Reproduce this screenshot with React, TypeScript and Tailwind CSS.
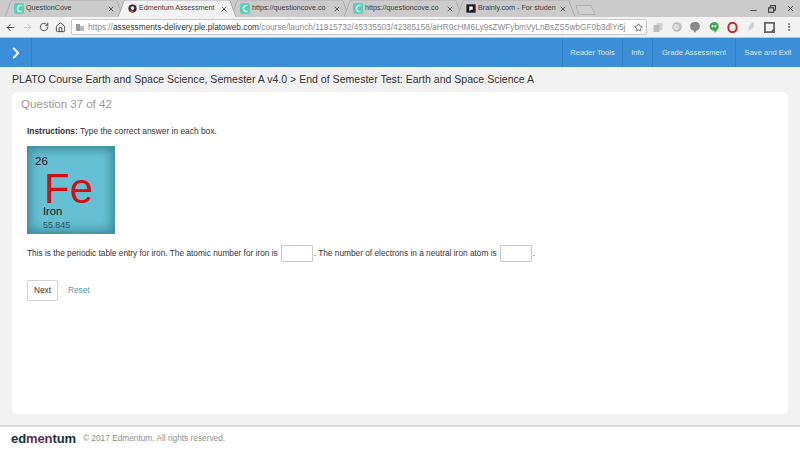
import React from 'react'
import { ArrowLeft, ArrowRight, RotateCw, Home, Star, X, ChevronRight, MoreVertical, Minus } from 'lucide-react'

function QCIcon() {
  return (
    <span className="w-[10px] h-[11px] rounded-[2px] bg-[#5fd0b8] flex items-center justify-center shrink-0">
      <span className="w-[5px] h-[7px] rounded-l-full border-[1.5px] border-r-0 border-white"></span>
    </span>
  )
}

function EdIcon() {
  return (
    <svg width="9" height="9" viewBox="0 0 11 11" className="shrink-0">
      <circle cx="5.5" cy="5.5" r="5" fill="#2b2b2b" />
      <circle cx="5.5" cy="5" r="2.2" fill="#fff" />
      <path d="M1.5 7.5 A5 5 0 0 0 7 10.2 L6 7.5 Z" fill="#c2453f" />
    </svg>
  )
}

function BrainlyIcon() {
  return (
    <svg width="10" height="11" viewBox="0 0 12 12" className="shrink-0">
      <rect x="0.5" y="1" width="11" height="10" fill="#1a1a1a" />
      <path d="M4 3.5 H8 V7.5 H6 L4 9 Z" fill="#fff" />
    </svg>
  )
}

function Tab({ icon, label, active }: { icon: React.ReactNode; label: string; active?: boolean }) {
  return (
    <div className={`relative w-[113px] h-[17px] flex items-center pl-[9px] pr-[3px] gap-[2px] ${active ? 'z-10' : ''}`}>
      <svg className="absolute left-0 top-0" width="118" height="17" viewBox="0 0 118 17">
        <path
          d="M0 17 L6 1 Q6.4 0 8 0 H110 Q111.6 0 112 1 L118 17"
          fill={active ? '#f2f2f2' : '#cbcbcb'}
          stroke={active ? '#9c9c9c' : '#a5a5a5'}
          strokeWidth="0.8"
        />
      </svg>
      <span className="relative w-[10px] flex items-center justify-center shrink-0">{icon}</span>
      <span className="relative flex-1 overflow-hidden whitespace-nowrap text-[7.2px] text-[#3c3c3c]">{label}</span>
      <X className="relative shrink-0 text-[#444]" size={8} strokeWidth={2.5} />
    </div>
  )
}

function NavItem({ label, w }: { label: string; w: string }) {
  return (
    <div className={`h-full flex items-center justify-center border-l border-[#2f7fc4] text-[7.6px] text-[#dcebf7] ${w}`}>
      {label}
    </div>
  )
}

function ExtIcon({ children }: { children: React.ReactNode }) {
  return <span className="w-[18.7px] flex items-center justify-center shrink-0">{children}</span>
}

export default function App() {
  return (
    <div className="w-[800px] h-[450px] overflow-hidden flex flex-col bg-[#f1f1f1] font-['Liberation_Sans',Arial,sans-serif]">
      {/* tab strip */}
      <div className="h-[17px] shrink-0 bg-[#cbcbcb] flex items-end pl-[5px] relative">
        <Tab icon={<QCIcon />} label="QuestionCove" />
        <Tab icon={<EdIcon />} label="Edmentum Assessment" active />
        <Tab icon={<QCIcon />} label="https://questioncove.co" />
        <Tab icon={<QCIcon />} label="https://questioncove.co" />
        <Tab icon={<BrainlyIcon />} label="Brainly.com - For studen" />
        <svg width="21" height="10" viewBox="0 0 21 10" className="ml-[5px] mb-[2px]">
          <path d="M4 9.5 L1 .5 H16 L20 9.5 Z" fill="#cfcfcf" stroke="#a8a8a8" strokeWidth="0.8" />
        </svg>
        <div className="ml-auto flex items-center h-full gap-[10px] pr-[5px] text-[#444]">
          <Minus size={9} strokeWidth={2.5} className="mt-[3px]" />
          <svg width="8" height="8" viewBox="0 0 8 8" fill="none" stroke="#444" strokeWidth="1.2">
            <rect x="2.5" y=".6" width="5" height="4.5" />
            <rect x=".6" y="2.8" width="5" height="4.5" fill="#cbcbcb" />
          </svg>
          <X size={9} strokeWidth={2.5} />
        </div>
      </div>

      {/* toolbar */}
      <div className="h-[21px] shrink-0 bg-[#f2f2f2] flex items-center pl-[5px] border-b border-[#c4c4c4]">
        <ArrowLeft size={11} strokeWidth={2} className="text-[#444] shrink-0" />
        <ArrowRight size={11} strokeWidth={2} className="text-[#c4c4c4] shrink-0 ml-[6px]" />
        <RotateCw size={10} strokeWidth={2} className="text-[#444] shrink-0 ml-[6px]" />
        <Home size={11} strokeWidth={2} className="text-[#444] shrink-0 ml-[6px]" />
        <div className="ml-[5px] w-[576px] h-[16px] shrink-0 bg-white border border-[#c8c8c8] rounded-[2px] flex items-center pl-[4px] pr-[3px]">
          <svg width="8" height="7" viewBox="0 0 8 7" className="shrink-0">
            <rect x="0" y="0" width="4" height="7" fill="#9a9a9a" />
            <rect x="4" y="2" width="4" height="5" fill="#bcbcbc" />
          </svg>
          <span className="ml-[4px] flex-1 overflow-hidden whitespace-nowrap text-[8.3px] text-[#8a8a8a]">
            https://<span className="text-[#333]">assessments-delivery.ple.platoweb.com</span>/course/launch/11915732/45335503/42385158/aHR0cHM6Ly9sZWFybmVyLnBsZS5wbGF0b3dlYi5j
          </span>
          <Star size={9} strokeWidth={2} className="text-[#444] shrink-0 ml-[3px]" />
        </div>
        <div className="ml-[1.5px] flex items-center">
          <ExtIcon>
            <svg width="10" height="10" viewBox="0 0 10 10">
              <rect x="3.5" y="1" width="6" height="7" fill="#d2d2d2" />
              <rect x="0.5" y="3" width="6" height="7" fill="#bdbdbd" />
            </svg>
          </ExtIcon>
          <ExtIcon>
            <svg width="10" height="10" viewBox="0 0 10 10">
              <circle cx="5" cy="5" r="4.8" fill="#bdbdbd" />
              <circle cx="4.4" cy="5" r="3" fill="#dedede" />
            </svg>
          </ExtIcon>
          <ExtIcon>
            <svg width="10" height="11" viewBox="0 0 10 11">
              <path d="M5 0 A4.6 4.4 0 0 1 6.6 8.6 L5 11 L3.4 8.6 A4.6 4.4 0 0 1 5 0 Z" fill="#8a8a8a" />
            </svg>
          </ExtIcon>
          <ExtIcon>
            <svg width="10" height="11" viewBox="0 0 10 11">
              <path d="M5 0 A4.7 4.4 0 0 1 9.7 4.4 C9.7 7 7.5 9 5.6 11 V8.8 A4.7 4.4 0 0 1 5 0 Z" fill="#36a745" />
              <rect x="2.7" y="3" width="1.7" height="2.4" fill="#fff" />
              <rect x="5.6" y="3" width="1.7" height="2.4" fill="#fff" />
            </svg>
          </ExtIcon>
          <ExtIcon>
            <svg width="11" height="11" viewBox="0 0 11 11">
              <ellipse cx="5.5" cy="5.5" rx="4.2" ry="4.7" fill="none" stroke="#c9262c" strokeWidth="2" />
            </svg>
          </ExtIcon>
          <ExtIcon>
            <svg width="8" height="10" viewBox="0 0 8 10">
              <path d="M7 0 C3.5 1 1.5 4 1.6 7.4 L0.6 10 L2.2 8 C5.5 8 7.4 4 7 0 Z" fill="#d0d0d0" />
            </svg>
          </ExtIcon>
          <ExtIcon>
            <svg width="11" height="11" viewBox="0 0 11 11">
              <rect x="0" y="0" width="11" height="11" fill="#666" />
              <path d="M1.8 1.8 H9.2 V7 L7 9.2 H1.8 Z" fill="#f4f4f4" />
            </svg>
          </ExtIcon>
          <ExtIcon><MoreVertical size={10} strokeWidth={2.5} className="text-[#666]" /></ExtIcon>
        </div>
      </div>

      {/* app bar */}
      <div className="h-[29px] shrink-0 bg-[#3b8ed8] flex items-center">
        <div className="w-[32px] h-full flex items-center justify-center border-r border-[#2f7fc4]">
          <ChevronRight size={18} strokeWidth={2.5} className="text-white" />
        </div>
        <div className="ml-auto h-full flex">
          <NavItem label="Reader Tools" w="w-[60px]" />
          <NavItem label="Info" w="w-[30px]" />
          <NavItem label="Grade Assessment" w="w-[83px]" />
          <NavItem label="Save and Exit" w="w-[65px]" />
        </div>
      </div>

      {/* title */}
      <div className="h-[25px] shrink-0 pl-[12px] pt-[5px] text-[10.55px] leading-[14px] text-[#333]">
        PLATO Course Earth and Space Science, Semester A v4.0 &gt; End of Semester Test: Earth and Space Science A
      </div>

      {/* card */}
      <div className="mx-[12px] h-[322px] shrink-0 bg-white rounded-[5px] pl-[9px]">
        <div className="pt-[5px] text-[11.5px] leading-[14px] text-[#999]">Question 37 of 42</div>
        <div className="pl-[6px]">
          <p className="mt-[15px] text-[8.4px] leading-[10px] text-[#333]">
            <b>Instructions:</b> Type the correct answer in each box.
          </p>
          <div className="mt-[10px] relative w-[88px] h-[88px] bg-[#66c0d3] shadow-[inset_0_0_10px_4px_rgba(35,105,120,0.6)]">
            <span className="absolute left-[8px] top-[8px] text-[11.5px] leading-[14px] text-[#111]">26</span>
            <span className="absolute left-[17px] top-[18px] text-[42px] leading-[50px] text-[#d40f14]">Fe</span>
            <span className="absolute left-[16px] top-[59px] text-[11.2px] leading-[13px] text-[#111]">Iron</span>
            <span className="absolute left-[16px] top-[74px] text-[8.9px] leading-[11px] text-[#2a5560]">55.845</span>
          </div>
          <div className="mt-[11px] h-[17px] flex items-center text-[8.3px] text-[#333]">
            This is the periodic table entry for iron. The atomic number for iron is
            <span className="ml-[3px] mr-[1px] w-[32px] h-[17px] border border-[#c8c8c8] rounded-[1px] bg-white"></span>
            . The number of electrons in a neutral iron atom is
            <span className="ml-[3px] mr-[1px] w-[32px] h-[17px] border border-[#c8c8c8] rounded-[1px] bg-white"></span>
            .
          </div>
          <div className="mt-[18px] flex items-center">
            <button className="w-[31px] h-[21px] border border-[#d4d4d4] rounded-[2px] bg-white text-[8.3px] text-[#333]">Next</button>
            <span className="ml-[10px] text-[8.3px] text-[#5b93ab]">Reset</span>
          </div>
        </div>
      </div>

      {/* footer */}
      <div className="mt-[11px] flex-1 bg-white border-t-2 border-[#dcdcdc] flex items-center pl-[11px] pb-[1px]">
        <span className="text-[13px] leading-none font-bold tracking-[-0.1px] text-[#12303f]">
          ed<span className="text-[#5c2f4c]">men</span><span className="text-[#17323a]">tum</span>
        </span>
        <span className="ml-[7px] text-[8.3px] text-[#8e8e8e]">© 2017 Edmentum. All rights reserved.</span>
      </div>
    </div>
  )
}
